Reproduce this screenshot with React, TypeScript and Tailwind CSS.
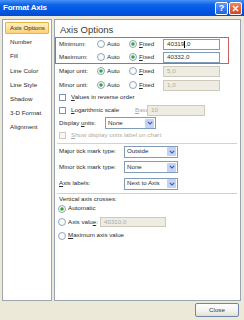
import React from "react";

function Radio({ checked = false }: { checked?: boolean }) {
  return (
    <svg width="8" height="8" viewBox="0 0 8 8" className="shrink-0">
      <circle cx="4" cy="4" r="3.5" fill="#fbfbf7" stroke="#7590b2" strokeWidth="0.8" />
      {checked && <circle cx="4" cy="4" r="1.8" fill="#36a836" />}
    </svg>
  );
}

function Check({ disabled = false }: { disabled?: boolean }) {
  return (
    <div
      className={`w-[7px] h-[7px] shrink-0 border ${
        disabled ? "border-[#cfccbf] bg-[#f7f6f0]" : "border-[#7d95b3] bg-white"
      }`}
    />
  );
}

function Field({
  cls,
  value,
  disabled = false,
  caret = false,
}: {
  cls: string;
  value: string;
  disabled?: boolean;
  caret?: boolean;
}) {
  return (
    <div
      className={`${cls} shrink-0 border flex items-center pl-[3px] ${
        disabled
          ? "bg-[#efede3] border-[#cdcabb] text-[#aeab9c]"
          : "bg-white border-[#7f9db9] text-[#333]"
      }`}
    >
      {caret ? (
        <span className="flex items-center">
          40319<span className="inline-block w-px h-[7px] bg-black" />,0
        </span>
      ) : (
        <span>{value}</span>
      )}
    </div>
  );
}

function Select({ cls, value }: { cls: string; value: string }) {
  return (
    <div
      className={`${cls} shrink-0 h-[12px] border border-[#7f9db9] bg-white flex items-center justify-between pl-[2px] pr-[1px]`}
    >
      <span>{value}</span>
      <div className="w-[9px] h-[9px] rounded-[1px] bg-[#c1d2fb] flex items-center justify-center">
        <svg width="6" height="4" viewBox="0 0 6 4">
          <path d="M0.8 0.8 L3 3 L5.2 0.8" fill="none" stroke="#4a5f8a" strokeWidth="1.1" />
        </svg>
      </div>
    </div>
  );
}

function ValueRow({
  label,
  auto,
  value,
  disabled = false,
  caret = false,
  pad,
}: {
  label: string;
  auto: boolean;
  value: string;
  disabled?: boolean;
  caret?: boolean;
  pad: string;
}) {
  return (
    <div className={`flex items-center ${pad}`}>
      <span className="w-[38px]">{label}</span>
      <div className="w-[32px] flex items-center gap-[2px]">
        <Radio checked={auto} />
        <span>Auto</span>
      </div>
      <div className="w-[34px] flex items-center gap-[2px]">
        <Radio checked={!auto} />
        <span>
          <u>F</u>ixed
        </span>
      </div>
      <Field cls="w-[57px] h-[11px]" value={value} disabled={disabled} caret={caret} />
    </div>
  );
}

const items = [
  "Axis Options",
  "Number",
  "Fill",
  "Line Color",
  "Line Style",
  "Shadow",
  "3-D Format",
  "Alignment",
];

export default function App() {
  return (
    <div className="w-[244px] h-[320px] bg-[#ece9d8] flex flex-col overflow-hidden whitespace-nowrap font-['Liberation_Sans',Arial,sans-serif] text-[6.2px] leading-none text-[#2a2a2a]">
      {/* Title bar */}
      <div className="h-[16px] shrink-0 flex items-center justify-between pl-[3px] pr-[2px] bg-[linear-gradient(180deg,#4a92f8_0%,#0d62e8_30%,#0056e0_70%,#004bd0_100%)]">
        <span className="text-white font-bold text-[8px] tracking-[-0.2px]">Format Axis</span>
        <div className="flex gap-[1px]">
          <div className="w-[13px] h-[13px] rounded-[2px] border border-white bg-[linear-gradient(180deg,#5b9bff,#1f5fe6)] text-white font-bold text-[9px] flex items-center justify-center">
            ?
          </div>
          <div className="w-[13px] h-[13px] rounded-[2px] border border-white bg-[linear-gradient(180deg,#f2865e,#d8451e)] flex items-center justify-center">
            <svg width="7" height="7" viewBox="0 0 7 7">
              <path d="M1 1 L6 6 M6 1 L1 6" stroke="white" strokeWidth="1.5" />
            </svg>
          </div>
        </div>
      </div>

      {/* Body */}
      <div className="flex-1 flex flex-col pl-[2px] pr-[3px] pt-[3px]">
        <div className="h-[282px] flex gap-[2px]">
          {/* Left list */}
          <div className="w-[50px] border border-[#9ea6b0] bg-white flex flex-col px-[2px] pt-[1px]">
            {items.map((it, i) => (
              <div key={it} className="h-[14.2px] flex items-center">
                {i === 0 ? (
                  <div className="w-full h-[12px] rounded-[1px] border border-[#e3b24c] bg-[linear-gradient(180deg,#fff0c0,#ffd27a)] flex items-center pl-[4px]">
                    {it}
                  </div>
                ) : (
                  <div className="pl-[5px]">{it}</div>
                )}
              </div>
            ))}
          </div>

          {/* Right panel */}
          <div className="flex-1 border border-[#98a4b4] bg-white flex flex-col">
            <div className="h-[17px] pt-[4px] pl-[5px] text-[9.5px] leading-[11px] text-[#3a3a3a]">
              Axis Options
            </div>
            <div className="w-[174px] h-[27px] border border-[#cc5f5f] flex flex-col gap-[1px]">
              <div className="h-[12px] flex">
                <ValueRow label="Minimum:" auto={false} value="40319,0" caret pad="pl-[3px]" />
              </div>
              <div className="h-[12px] flex">
                <ValueRow label="Maximum:" auto={false} value="40332,0" pad="pl-[3px]" />
              </div>
            </div>
            <div className="h-[14px] flex">
              <ValueRow label="Major unit:" auto value="5,0" disabled pad="pl-[4px]" />
            </div>
            <div className="h-[14px] flex">
              <ValueRow label="Minor unit:" auto value="1,0" disabled pad="pl-[4px]" />
            </div>
            <div className="h-[11px] flex items-center gap-[5px] pl-[4px]">
              <Check />
              <span>
                <u>V</u>alues in reverse order
              </span>
            </div>
            <div className="h-[14px] flex items-center pl-[4px]">
              <div className="w-[76px] flex items-center gap-[5px]">
                <Check />
                <span>
                  <u>L</u>ogarithmic scale
                </span>
              </div>
              <span className="w-[12px] text-[#aeab9c]">
                <u>B</u>ase:
              </span>
              <Field cls="w-[58px] h-[11px]" value="10" disabled />
            </div>
            <div className="h-[12px] flex items-center pl-[4px]">
              <span className="w-[46px]">
                Display <u>u</u>nits:
              </span>
              <Select cls="w-[51px]" value="None" />
            </div>
            <div className="h-[13px] flex items-center gap-[5px] pl-[4px] text-[#aeab9c]">
              <Check disabled />
              <span>
                <u>S</u>how display units label on chart
              </span>
            </div>
            <div className="mt-[1px] ml-[2px] mr-[3px] h-px bg-[#d6d3c6]" />
            <div className="h-[15px] flex items-center pl-[4px]">
              <span className="w-[65px]">Major tick mark type:</span>
              <Select cls="w-[54px]" value="Outside" />
            </div>
            <div className="h-[16px] flex items-center pl-[4px]">
              <span className="w-[65px]">Minor tick mark type:</span>
              <Select cls="w-[54px]" value="None" />
            </div>
            <div className="h-[17px] flex items-center pl-[4px]">
              <span className="w-[65px]">
                <u>A</u>xis labels:
              </span>
              <Select cls="w-[54px]" value="Next to Axis" />
            </div>
            <div className="mt-[1px] ml-[2px] mr-[3px] h-px bg-[#d6d3c6]" />
            <div className="h-[10px] flex items-center pl-[4px]">Vertical axis crosses:</div>
            <div className="h-[9px] flex items-center gap-[2px] pl-[3px]">
              <Radio checked />
              <span>Automatic</span>
            </div>
            <div className="h-[18px] flex items-center pl-[3px]">
              <Radio />
              <span className="w-[34px] pl-[2px] shrink-0">
                Axis valu<u>e</u>:
              </span>
              <Field cls="w-[66px] h-[10px]" value="40310,0" disabled />
            </div>
            <div className="h-[9px] flex items-center gap-[2px] pl-[3px]">
              <Radio />
              <span>
                <u>M</u>aximum axis value
              </span>
            </div>
          </div>
        </div>

        <div className="mt-[2px] flex justify-end pr-[2px]">
          <div className="w-[44px] h-[14px] rounded-[2px] border border-[#6f86a8] bg-[linear-gradient(180deg,#ffffff,#f3f2ec_60%,#e2dfd2)] flex items-center justify-center text-[#333]">
            Close
          </div>
        </div>
      </div>
    </div>
  );
}
